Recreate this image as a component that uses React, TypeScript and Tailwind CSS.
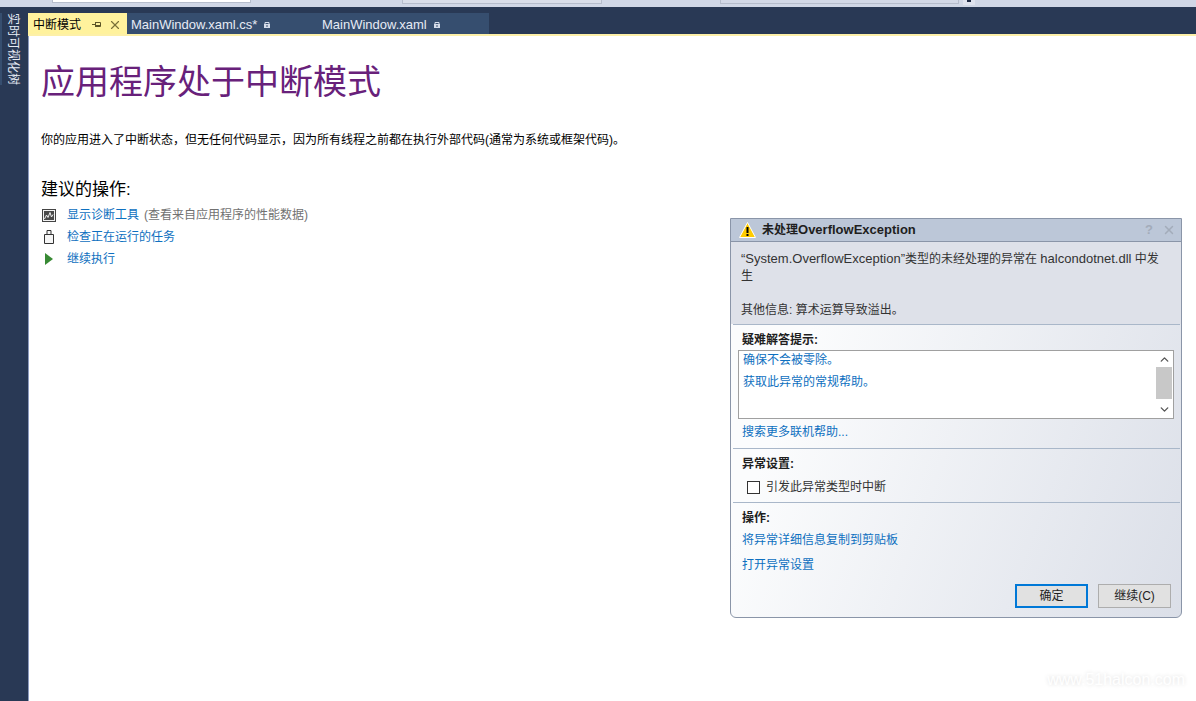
import { ChevronDown, ChevronUp, X } from "lucide-react";

const cjk = "font-['Liberation_Sans','Noto_Sans_CJK_SC',sans-serif]";

const Link = ({ children }: { children: string }) => (
  <span className="text-[12px] leading-[16px] text-[#0e70c0]">{children}</span>
);

const Divider = () => <div className="ml-[2px] mr-[1px] h-px shrink-0 bg-[#a9b7c9]" />;

const PinIcon = () => (
  <svg width="9" height="9" viewBox="0 0 9 9" className="text-[#5d5526]">
    <path d="M0 4.5h3M3.5 2v5M3.5 2.5h5v4h-5M3.5 5.5h5" fill="none" stroke="currentColor" />
  </svg>
);

const LockIcon = () => (
  <svg width="6" height="7" viewBox="0 0 6 7" className="text-[#d5dcea]">
    <path d="M1 3V1.5h4V3" fill="none" stroke="currentColor" />
    <path d="M0 3h6v4H0z" fill="currentColor" />
    <path d="M2 4.5h2v1H2z" fill="#364e6f" />
  </svg>
);

const Toolbar = () => (
  <div className="flex h-[7px] shrink-0 bg-[#d0d7e6]">
    <div className="ml-[52px] h-[3px] w-[199px] border-x border-b border-[#b6bdcc] bg-white" />
    <div className="ml-[151px] h-[4px] w-[200px] border-x border-b border-[#b6bdcc] bg-[#d9dee9]" />
    <div className="ml-[118px] h-[4px] w-[239px] border-x border-b border-[#b6bdcc] bg-[#d3d9e7]" />
    <div className="ml-[4px] flex h-[5px] w-[12px] justify-center bg-[#dfe3ee]">
      <div className="h-[2px] w-[4px] bg-[#1e2a44]" />
    </div>
  </div>
);

const Tabs = () => (
  <div className="flex h-[21px] shrink-0">
    <div className="flex w-[99px] items-center bg-[#fff29d] pl-[5px] pt-[2px] text-[12px] text-black">
      <span className="w-[59px]">中断模式</span>
      <PinIcon />
      <X size={14} strokeWidth={2} className="ml-[7px] text-[#7a7139]" />
    </div>
    <div className="flex w-[362px] items-center bg-[#364e6f] pt-[2px] text-[13px] text-[#e6ebf5]">
      <div className="flex w-[195px] items-center gap-[7px] pl-[4px]">
        <span>MainWindow.xaml.cs*</span>
        <LockIcon />
      </div>
      <div className="flex items-center gap-[7px]">
        <span>MainWindow.xaml</span>
        <LockIcon />
      </div>
    </div>
  </div>
);

const Rail = () => (
  <div className="flex w-[28px] shrink-0 pt-[6px]">
    <div className="h-[72px] w-[2px] bg-[#364e6f]" />
    <div className="ml-[4px] h-[72px] text-[12px] leading-[14px] text-[#e6ebf5] [text-orientation:sideways] [writing-mode:vertical-rl]">
      实时可视化树
    </div>
  </div>
);

const Actions = () => (
  <div className="mt-[6px] flex flex-col gap-[6px] text-[12px] leading-[16px]">
    <div className="flex items-center gap-[12px]">
      <svg width="14" height="13" viewBox="0 0 14 13" className="ml-[1px] shrink-0">
        <rect x="0.5" y="0.5" width="13" height="12" fill="#f3f3f3" stroke="#444" />
        <rect x="2" y="2" width="10" height="9" fill="#4a4a4a" />
        <path d="M2.5 10l2-4 1.5 2.5L8 3.5l1.5 4.5L11 5.5" fill="none" stroke="#f0f0f0" />
      </svg>
      <span className="-ml-[1px] text-[#0e70c0]">显示诊断工具</span>
      <span className="-ml-[7px] text-[#717171]">(查看来自应用程序的性能数据)</span>
    </div>
    <div className="flex items-center gap-[13px]">
      <svg width="10" height="14" viewBox="0 0 10 14" className="ml-[3px] shrink-0">
        <path d="M0.5 4.5h9v9h-9zM3 4.5V0.5h4v4" fill="#f6f6f6" stroke="#333" />
      </svg>
      <Link>检查正在运行的任务</Link>
    </div>
    <div className="flex items-center gap-[14px]">
      <svg width="8" height="12" viewBox="0 0 8 12" className="ml-[4px] shrink-0">
        <path d="M0 0l8 6-8 6z" fill="#388a34" />
      </svg>
      <Link>继续执行</Link>
    </div>
  </div>
);

const Dialog = () => (
  <div className="absolute left-[730px] top-[218px] flex h-[400px] w-[452px] flex-col overflow-hidden rounded-b-[6px] border border-[#8a95a8] bg-[linear-gradient(110deg,#fbfcfd_20%,#dbdfe8_100%)] text-[12px] leading-[16px] text-[#1e1e1e]">
    <div className="flex h-[23px] shrink-0 items-center border-b border-[#8a95a8] bg-[#bcc7d8] pl-[8px] pr-[5px]">
      <svg width="17" height="16" viewBox="0 0 17 16">
        <path d="M8.5 0.5l8 15h-16z" fill="#fc0" stroke="#fff" />
        <path d="M7.5 5h2v6h-2zM7.5 12h2v2h-2z" fill="#000" />
      </svg>
      <span className="ml-[6px] text-[12px] font-bold">
        未处理<span className="text-[13px]">OverflowException</span>
      </span>
      <span className="ml-auto text-[13px] font-bold text-[#a3acba]">?</span>
      <X size={14} strokeWidth={2.5} className="ml-[9px] text-[#a3acba]" />
    </div>
    <div className="h-[82px] shrink-0 bg-[#dee1e9] pl-[10px] pt-[8px] text-[#333]">
      <p className="leading-[17px]">
        <span className="text-[13px]">“System.OverflowException”</span>类型的未经处理的异常在{" "}
        <span className="text-[13px]">halcondotnet.dll</span> 中发
        <br />生
      </p>
      <p className="mt-[17px] leading-[17px]">其他信息: 算术运算导致溢出。</p>
    </div>
    <Divider />
    <div className="flex shrink-0 flex-col pl-[11px] pr-[7px] pt-[7px]">
      <b className="h-[18px]">疑难解答提示:</b>
      <div className="-ml-[4px] flex h-[69px] border border-[#a0a0a0] bg-white pl-[4px]">
        <div className="flex flex-1 flex-col gap-[6px] pt-[1px]">
          <Link>确保不会被零除。</Link>
          <Link>获取此异常的常规帮助。</Link>
        </div>
        <div className="mr-[1px] flex w-[16px] flex-col items-center py-[2px] text-[#555]">
          <ChevronUp size={13} strokeWidth={2.5} />
          <div className="mt-[1px] h-[32px] w-full bg-[#c8c8c8]" />
          <ChevronDown size={13} strokeWidth={2.5} className="mt-auto" />
        </div>
      </div>
      <div className="mb-[8px] mt-[5px] flex h-[16px]">
        <Link>搜索更多联机帮助...</Link>
      </div>
    </div>
    <Divider />
    <div className="h-[53px] shrink-0 pl-[11px] pt-[7px]">
      <b className="block h-[17px]">异常设置:</b>
      <label className="mt-[6px] flex items-center gap-[6px] pl-[5px] text-[#333]">
        <span className="h-[13px] w-[13px] border border-[#333] bg-white" />
        引发此异常类型时中断
      </label>
    </div>
    <Divider />
    <div className="flex flex-1 flex-col pl-[11px] pr-[10px] pt-[7px]">
      <b className="h-[22px]">操作:</b>
      <Link>将异常详细信息复制到剪贴板</Link>
      <div className="mt-[9px]">
        <Link>打开异常设置</Link>
      </div>
      <div className="mt-[11px] flex justify-end gap-[10px]">
        <button className="h-[24px] w-[73px] border-2 border-[#0078d7] bg-[#e1e1e1] text-[12px]">确定</button>
        <button className="h-[24px] w-[73px] border border-[#adadad] bg-[#e1e1e1] text-[12px]">继续(C)</button>
      </div>
    </div>
  </div>
);

export default function App() {
  return (
    <div className={`relative flex h-[701px] w-[1196px] flex-col overflow-hidden bg-[#293955] ${cjk}`}>
      <Toolbar />
      <div className="flex flex-1">
        <Rail />
        <div className="flex flex-1 flex-col pt-[6px]">
          <Tabs />
          <div className="h-[2px] shrink-0 bg-[#fdf0a8]" />
          <div className="flex-1 border-l border-[#8c9bbf] bg-white pl-[12px]">
            <h1 className="mt-[24px] text-[34px] font-normal leading-[44px] text-[#68217a]">应用程序处于中断模式</h1>
            <p className="mt-[28px] text-[12px] leading-[16px] text-black">
              你的应用进入了中断状态，但无任何代码显示，因为所有线程之前都在执行外部代码(通常为系统或框架代码)。
            </p>
            <h2 className="mt-[31px] text-[17px] font-normal leading-[22px] text-black">建议的操作:</h2>
            <Actions />
          </div>
        </div>
      </div>
      <div className="absolute bottom-[9px] right-[11px] text-[16px] font-normal text-white [text-shadow:0_0_4px_#dcdcdc]">
        www.51halcon.com
      </div>
      <Dialog />
    </div>
  );
}
